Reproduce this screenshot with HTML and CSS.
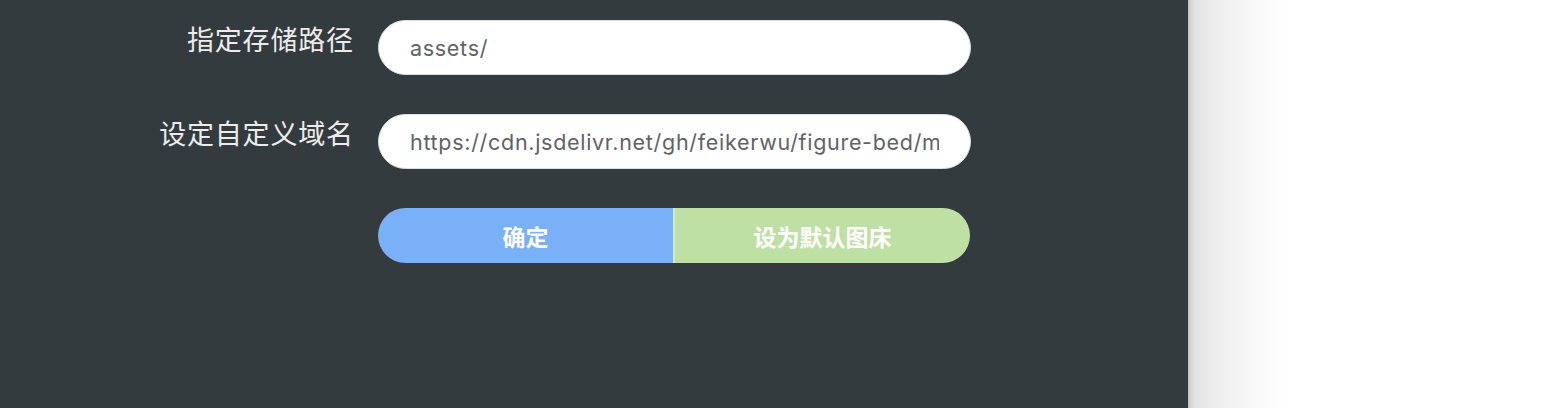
FILE: index.html
```html
<!DOCTYPE html>
<html lang="zh-CN">
<head>
<meta charset="utf-8">
<title>图床设置</title>
<link rel="stylesheet" href="styles.css">
</head>
<body>
<div class="page">
  <div class="panel">
    <form class="form">
      <label class="label">指定存储路径</label>
      <div class="field"><input class="input" type="text" value="assets/"></div>
      <label class="label">设定自定义域名</label>
      <div class="field"><input class="input" type="text" value="https://cdn.jsdelivr.net/gh/feikerwu/figure-bed/master/"></div>
      <div class="label"></div>
      <div class="btn-group">
        <button type="button" class="btn btn-primary">确定</button>
        <button type="button" class="btn btn-success">设为默认图床</button>
      </div>
    </form>
  </div>
  <div class="side"></div>
</div>
</body>
</html>
```
FILE: styles.css
```css
html, body {
  margin: 0;
  padding: 0;
  height: 100%;
}
body {
  font-family: "Liberation Sans", "Noto Sans CJK SC", sans-serif;
  overflow: hidden;
}
.page {
  display: flex;
  height: 408px;
}
.panel {
  width: 1188px;
  flex: none;
  background: #343b3f;
}
.side {
  flex: 1;
  background: linear-gradient(to right, #bdbdbd 0, #d3d3d3 2px, #e3e3e3 8px, #eeeeee 30px, #f8f8f8 65px, #ffffff 100px);
}
.form {
  display: grid;
  grid-template-columns: 353px 593px;
  column-gap: 25px;
  row-gap: 39px;
  padding-top: 20px;
}
.label {
  justify-self: end;
  align-self: start;
  color: #ececec;
  font-family: "Noto Sans CJK SC", sans-serif;
  font-size: 27px;
  letter-spacing: 0.8px;
  margin-right: -0.8px;
  line-height: 37px;
}
.field {
  height: 55px;
}
.input {
  box-sizing: border-box;
  width: 100%;
  height: 55px;
  border: 1px solid #dcdfe6;
  border-radius: 28px;
  background: #ffffff;
  padding: 0 31px;
  font-family: "Inter", "Liberation Sans", sans-serif;
  font-size: 21.5px;
  letter-spacing: 0.7px;
  color: #606266;
  outline: none;
}
.btn-group {
  display: flex;
  height: 55px;
  width: 592px;
}
.btn {
  flex: 1;
  border: none;
  margin: 0;
  padding: 0;
  color: #ffffff;
  font-family: "Noto Sans CJK SC", sans-serif;
  font-weight: 700;
  font-size: 23px;
  cursor: pointer;
}
.btn-primary {
  background: #79b0f8;
  border-radius: 28px 0 0 28px;
}
.btn-success {
  background: #bfe0a4;
  border-left: 2px solid #d6ecc4;
  border-radius: 0 28px 28px 0;
}
```
